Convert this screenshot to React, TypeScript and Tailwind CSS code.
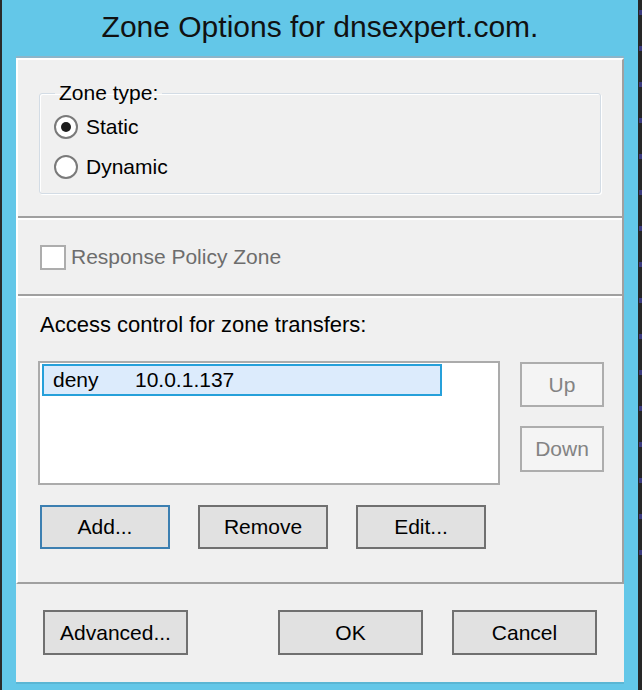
const MARKS = Array.from({ length: 16 });

function Radio({ label, checked }: { label: string; checked?: boolean }) {
  return (
    <div className="flex h-[28px] items-center gap-[8px]">
      <span className="flex h-[24px] w-[24px] items-center justify-center rounded-full border-2 border-[#7a7a7a] bg-white">
        {checked && <span className="h-[10px] w-[10px] rounded-full bg-[#1c1c1c]" />}
      </span>
      <span className="leading-[24px]">{label}</span>
    </div>
  );
}

function Btn({
  label,
  width,
  height = "h-[44px]",
  focused,
}: {
  label: string;
  width: string;
  height?: string;
  focused?: boolean;
}) {
  return (
    <button
      className={`${width} ${height} flex shrink-0 items-center justify-center border-2 bg-[#e1e1e1] text-[21px] leading-[24px] text-black ${
        focused ? "border-[#3c7fb1]" : "border-[#707070]"
      }`}
    >
      {label}
    </button>
  );
}

function Separator() {
  return <div className="h-[4px] border-t-2 border-b-2 border-t-[#a0a0a0] border-b-white" />;
}

export default function App() {
  return (
    <div className="flex h-[690px] w-[642px] overflow-hidden bg-[#63c7e8] font-['Liberation_Sans',Arial,sans-serif] text-[21px] text-black">
      <div className="w-[2px] bg-[#2a2a2a]" />

      <div className="flex flex-1 flex-col">
        <div className="h-[56px] pt-[12px] text-center text-[30px] leading-[30px] text-[#111]">
          Zone Options for dnsexpert.com.
        </div>

        <div className="ml-[14px] flex w-[608px] flex-col">
          <div className="border-t-2 border-[#8db5c9]">
            <div className="border-2 border-t-white border-l-white border-r-[#a0a0a0] border-b-[#a0a0a0] bg-[#f0f0f0]">
              {/* zone type */}
              <div className="h-[156px] px-[21px] pt-[22px]">
                <fieldset className="h-[112px] rounded-[3px] border border-[#d3dce5] shadow-[inset_1px_1px_0_white,1px_1px_0_white]">
                  <legend className="ml-[15px] px-[4px] leading-[22px]">Zone type:</legend>
                  <div className="flex flex-col gap-[12px] pl-[14px] pt-[9px]">
                    <Radio label="Static" checked />
                    <Radio label="Dynamic" />
                  </div>
                </fieldset>
              </div>

              <Separator />

              {/* response policy zone */}
              <div className="flex h-[74px] items-center gap-[5px] pl-[22px]">
                <span className="h-[25px] w-[26px] border-2 border-[#adadad] bg-white" />
                <span className="leading-[24px] text-[#6d6d6d]">Response Policy Zone</span>
              </div>

              <Separator />

              {/* access control */}
              <div className="h-[284px] pl-[20px] pr-[18px] pt-[15px]">
                <p className="pl-[2px] text-[22px] leading-[24px]">Access control for zone transfers:</p>
                <div className="mt-[24px] flex">
                  <div className="h-[124px] w-[462px] shrink-0 border-2 border-[#ababab] bg-white pl-[2px] pt-[1px]">
                    <div className="flex h-[32px] w-[400px] items-center border-2 border-[#26a0da] bg-[#dcebfc] pl-[9px] leading-[24px]">
                      <span className="w-[82px]">deny</span>
                      <span>10.0.1.137</span>
                    </div>
                  </div>
                  <div className="ml-[20px] flex shrink-0 flex-col gap-[19px] pt-[1px]">
                    <div className="flex h-[45px] w-[84px] items-center justify-center border-2 border-[#adadad] bg-[#f4f4f4] leading-[24px] text-[#838383]">
                      Up
                    </div>
                    <div className="flex h-[46px] w-[84px] items-center justify-center border-2 border-[#adadad] bg-[#f4f4f4] leading-[24px] text-[#838383]">
                      Down
                    </div>
                  </div>
                </div>
                <div className="mt-[20px] flex gap-[28px] pl-[2px]">
                  <Btn label="Add..." width="w-[130px]" focused />
                  <Btn label="Remove" width="w-[130px]" />
                  <Btn label="Edit..." width="w-[130px]" />
                </div>
              </div>
            </div>
          </div>

          <div className="flex h-[98px] bg-[#f0f0f0] px-[27px] pt-[26px]">
            <Btn label="Advanced..." width="w-[145px]" height="h-[45px]" />
            <div className="ml-auto flex gap-[29px]">
              <Btn label="OK" width="w-[145px]" height="h-[45px]" />
              <Btn label="Cancel" width="w-[145px]" height="h-[45px]" />
            </div>
          </div>
          <div className="h-[2px] bg-[#5ab6d4]" />
        </div>
      </div>

      <div className="flex w-[4px] flex-col items-end gap-[31px] bg-[#262626] pt-[10px]">
        {MARKS.map((_, i) => (
          <div key={i} className="h-[5px] w-[3px] bg-[#3b3a7e]" />
        ))}
      </div>
    </div>
  );
}
